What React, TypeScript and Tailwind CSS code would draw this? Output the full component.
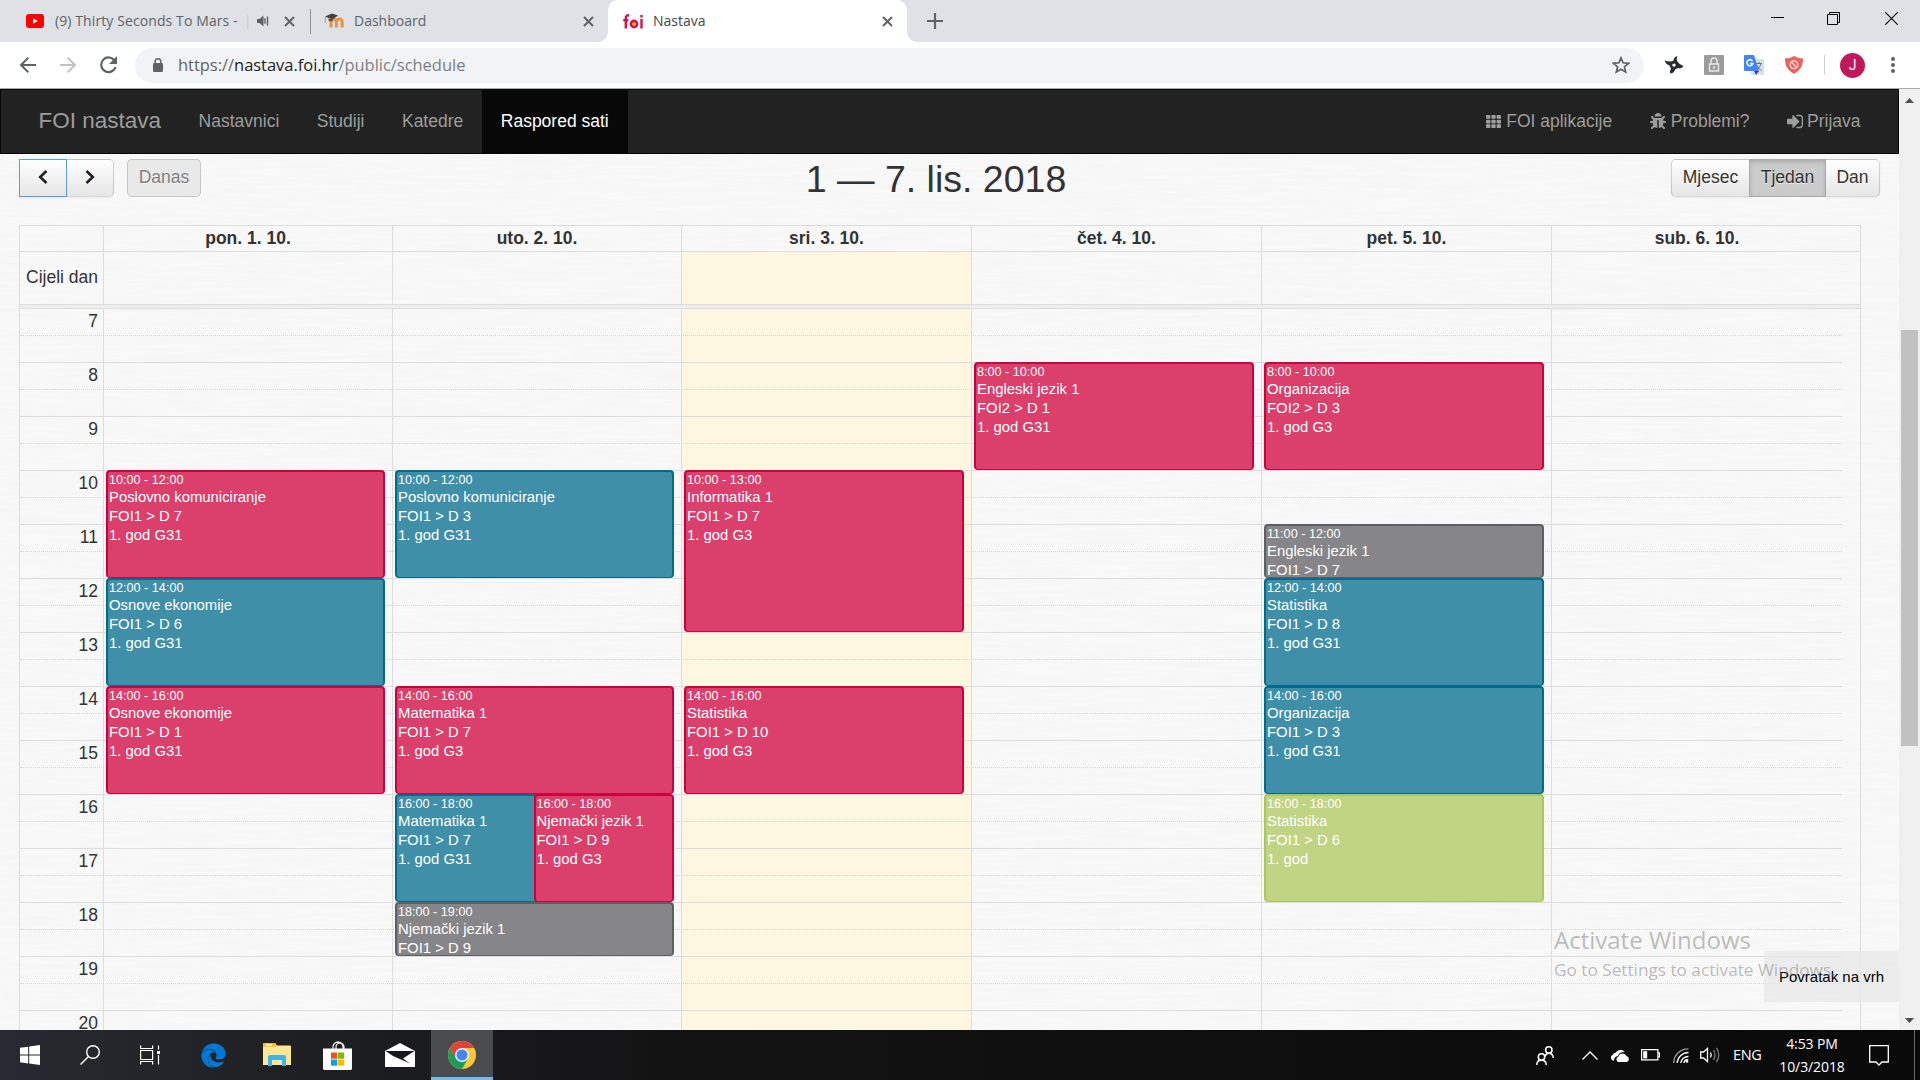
import type { ReactNode } from "react";
import clsx from "clsx";
import { FaBug, FaEdge, FaTh } from "react-icons/fa";

type Tone = "pink" | "teal" | "gray" | "green";

interface Lesson {
  start: number;
  end: number;
  title: string;
  room: string;
  group?: string;
  tone: Tone;
  half?: "left" | "right";
}

interface Day {
  label: string;
  width: string;
  today?: boolean;
  lessons: Lesson[];
}

const FIRST_HOUR = 7;
const HOURS = [7, 8, 9, 10, 11, 12, 13, 14, 15, 16, 17, 18, 19, 20];

const TONES: Record<Tone, string> = {
  pink: "bg-[#db3f6c] border-[#cc0040]",
  teal: "bg-[#3f8fa9] border-[#006b8c]",
  gray: "bg-[#868688] border-[#5e5f61]",
  green: "bg-[#c1d484] border-[#abc65b]",
};

const DAYS: Day[] = [
  {
    label: "pon. 1. 10.",
    width: "w-[289px]",
    lessons: [
      { start: 10, end: 12, title: "Poslovno komuniciranje", room: "FOI1 > D 7", group: "1. god G31", tone: "pink" },
      { start: 12, end: 14, title: "Osnove ekonomije", room: "FOI1 > D 6", group: "1. god G31", tone: "teal" },
      { start: 14, end: 16, title: "Osnove ekonomije", room: "FOI1 > D 1", group: "1. god G31", tone: "pink" },
    ],
  },
  {
    label: "uto. 2. 10.",
    width: "w-[289px]",
    lessons: [
      { start: 10, end: 12, title: "Poslovno komuniciranje", room: "FOI1 > D 3", group: "1. god G31", tone: "teal" },
      { start: 14, end: 16, title: "Matematika 1", room: "FOI1 > D 7", group: "1. god G3", tone: "pink" },
      { start: 16, end: 18, title: "Matematika 1", room: "FOI1 > D 7", group: "1. god G31", tone: "teal", half: "left" },
      { start: 16, end: 18, title: "Njemački jezik 1", room: "FOI1 > D 9", group: "1. god G3", tone: "pink", half: "right" },
      { start: 18, end: 19, title: "Njemački jezik 1", room: "FOI1 > D 9", tone: "gray" },
    ],
  },
  {
    label: "sri. 3. 10.",
    width: "w-[290px]",
    today: true,
    lessons: [
      { start: 10, end: 13, title: "Informatika 1", room: "FOI1 > D 7", group: "1. god G3", tone: "pink" },
      { start: 14, end: 16, title: "Statistika", room: "FOI1 > D 10", group: "1. god G3", tone: "pink" },
    ],
  },
  {
    label: "čet. 4. 10.",
    width: "w-[290px]",
    lessons: [
      { start: 8, end: 10, title: "Engleski jezik 1", room: "FOI2 > D 1", group: "1. god G31", tone: "pink" },
    ],
  },
  {
    label: "pet. 5. 10.",
    width: "w-[290px]",
    lessons: [
      { start: 8, end: 10, title: "Organizacija", room: "FOI2 > D 3", group: "1. god G3", tone: "pink" },
      { start: 11, end: 12, title: "Engleski jezik 1", room: "FOI1 > D 7", tone: "gray" },
      { start: 12, end: 14, title: "Statistika", room: "FOI1 > D 8", group: "1. god G31", tone: "teal" },
      { start: 14, end: 16, title: "Organizacija", room: "FOI1 > D 3", group: "1. god G31", tone: "teal" },
      { start: 16, end: 18, title: "Statistika", room: "FOI1 > D 6", group: "1. god", tone: "green" },
    ],
  },
  { label: "sub. 6. 10.", width: "w-[290px]", lessons: [] },
];

/* ---------- Browser ---------- */

const CloseIcon = ({ className }: { className?: string }) => (
  <svg className={clsx("h-[11px] w-[11px] shrink-0", className)} viewBox="0 0 11 11" stroke="#5f6368" strokeWidth="2">
    <path d="M1 1l9 9M10 1l-9 9" />
  </svg>
);

const TabStrip = () => (
  <div className="flex h-[42px] shrink-0 bg-[#dee1e6] font-['Open_Sans',sans-serif] text-[14px] text-[#5f6368]">
    <div className="flex w-[311px] items-center pl-[26px]">
      <svg className="h-[14px] w-[18px] shrink-0" viewBox="0 0 18 14">
        <rect width="18" height="14" rx="3" fill="#f00" />
        <path d="M7 4.2v5.6L11.8 7z" fill="#fff" />
      </svg>
      <span className="ml-[11px] w-[194px] overflow-hidden pb-[2px] whitespace-nowrap tracking-[0.1px]">
        (9) Thirty Seconds To Mars -<span className="ml-1.5 text-[#c9ccd1]">|</span>
      </span>
      <svg className="ml-[8px] h-[12px] w-[13px] shrink-0" viewBox="0 0 13 12" fill="#5f6368">
        <path d="M0 4h2.500L6.500.500v11L2.500 8H0z" />
        <path d="M8 3.200v5.600M10.500 1.500v9" stroke="#5f6368" strokeWidth="1.400" />
      </svg>
      <CloseIcon className="ml-[14px]" />
      <div className="ml-auto h-[25px] w-px bg-[#90949a]" />
    </div>
    <div className="flex w-[297px] items-center pl-[13px]">
      <svg className="h-[16px] w-[21px] shrink-0" viewBox="0 0 21 16">
        <path d="M5.500 15V9.500a2.700 2.700 0 015.400 0V15M10.900 15V9.500a2.900 2.900 0 015.800 0V15" transform="translate(1.500 -.5)" fill="none" stroke="#f0923b" strokeWidth="3" />
        <path d="M1 3.500L8 .5l6 2-5.500 4z" fill="#45413d" />
        <path d="M1.500 4L1 10" stroke="#b98a55" strokeWidth=".8" />
        <path d="M4.500 5.500v2.500l4 .5V6z" fill="#5b564f" />
      </svg>
      <span className="ml-[9px] pb-[2px]">Dashboard</span>
      <CloseIcon className="mr-[14px] ml-auto" />
    </div>
    <div className="relative flex w-[299px] items-center rounded-t-[10px] bg-white pl-[15px] text-[#45484c]">
      <svg className="absolute bottom-0 -left-[10px] h-[10px] w-[10px]" viewBox="0 0 10 10" fill="#fff">
        <path d="M10 0v10H0A10 10 0 0010 0z" />
      </svg>
      <svg className="absolute -right-[10px] bottom-0 h-[10px] w-[10px]" viewBox="0 0 10 10" fill="#fff">
        <path d="M0 0v10h10A10 10 0 010 0z" />
      </svg>
      <svg className="h-[15px] w-[21px] shrink-0" viewBox="0 0 21 15" fill="none" stroke="#d6124a" strokeWidth="2.400">
        <path d="M2.800 14.500V4.200Q2.800 1.200 6 1.300M.3 6.300h5" />
        <circle cx="11" cy="10" r="3" strokeWidth="2.800" />
        <circle cx="11" cy="10" r="1.500" fill="#f5c400" stroke="none" />
        <path d="M18.500 5v9.500M18.500 1v2.400" />
      </svg>
      <span className="ml-[9px] pb-[2px]">Nastava</span>
      <CloseIcon className="mr-[14px] ml-auto" />
    </div>
    <div className="flex flex-1 items-center pl-[20px]">
      <svg className="h-4 w-4" viewBox="0 0 16 16" stroke="#5f6368" strokeWidth="2.200">
        <path d="M8 0v16M0 8h16" />
      </svg>
      <div className="mb-[5px] ml-auto flex items-center pr-[22px]">
        <svg className="h-[13px] w-[13px]" viewBox="0 0 13 13" stroke="#000">
          <path d="M0 5.500h13" />
        </svg>
        <svg className="ml-[43px] h-[13px] w-[13px]" viewBox="0 0 13 13" stroke="#000" fill="none">
          <path d="M.5 2.500h10v10H.5zM2.500 2.500v-2h10v10h-2" />
        </svg>
        <svg className="ml-[45px] h-[13px] w-[13px]" viewBox="0 0 13 13" stroke="#000" strokeWidth="1.100">
          <path d="M.3.3l12.400 12.400M12.700.3L.3 12.700" />
        </svg>
      </div>
    </div>
  </div>
);

const Toolbar = () => (
  <div className="flex h-[47px] shrink-0 items-center border-b border-[#a9a9a9] bg-white pl-[19px]">
    <svg className="h-[18px] w-[18px]" viewBox="0 0 18 18" fill="none" stroke="#5f6368" strokeWidth="2">
      <path d="M17 9H2.500M9.300 1.700L2 9l7.300 7.300" />
    </svg>
    <svg className="ml-[22px] h-[18px] w-[18px]" viewBox="0 0 18 18" fill="none" stroke="#c0c2c5" strokeWidth="2">
      <path d="M1 9h14.500M8.700 1.700L16 9l-7.300 7.300" />
    </svg>
    <svg className="ml-[22px] h-[18px] w-[19px]" viewBox="0 0 19 18" fill="none" stroke="#5f6368" strokeWidth="2.200">
      <path d="M15.800 5A7.300 7.300 0 1016.500 11" />
      <path d="M18 0v8h-8z" fill="#5f6368" stroke="none" />
    </svg>
    <div className="ml-[17px] flex h-[35px] w-[1509px] items-center rounded-full bg-[#f1f3f4] pl-[18px]">
      <svg className="h-[14px] w-[10px]" viewBox="0 0 10 14">
        <rect y="5" width="10" height="9" rx="1.200" fill="#5f6368" />
        <path d="M2.200 6V3.600a2.800 2.800 0 015.600 0V6" fill="none" stroke="#5f6368" strokeWidth="1.500" />
      </svg>
      <span className="ml-[15px] font-['Open_Sans',sans-serif] text-[16.5px] tracking-[-0.03px] whitespace-nowrap text-[#7c8085]">
        <span className="text-[#5f6368]">https://</span>
        <span className="text-[#202124]">nastava.foi.hr</span>/public/schedule
      </span>
      <svg className="mr-[14px] ml-auto h-[18px] w-[18px]" viewBox="0 0 18 18" fill="none" stroke="#5f6368" strokeWidth="1.700">
        <path d="M9 1.800l2.100 5 5.400.5-4.100 3.500 1.300 5.300L9 13.300l-4.700 2.800 1.300-5.300L1.500 7.300l5.400-.5z" />
      </svg>
    </div>
    <svg className="ml-[20px] h-[20px] w-[20px]" viewBox="0 0 20 20" fill="#2b2e30">
      <path fillRule="evenodd" d="M13.500 1q-1.500 3.500 0 5.500 2 3.500 6 4.500-2 3.500-5.500 2-2.500 1-3 1.500-.5 3-4 4-2.500-1 0-4.500-1-3-1.500-3.500Q2 9.500.5 5.500 4 6.500 6.500 6.500 9 6 9.500 5.500 9.500 2 13.500 1zM10 8.400a1.700 1.700 0 100 3.400 1.700 1.700 0 000-3.400z" />
    </svg>
    <svg className="ml-[20px] h-[20px] w-[20px]" viewBox="0 0 20 20" fill="none" stroke="#e8e8e8" strokeWidth="1.400">
      <rect width="20" height="20" rx="1" fill="#9c9c9c" stroke="none" />
      <path d="M5.500 9h9v7h-9zM7 9V6a3 3 0 016 0v3M10 11v3" />
    </svg>
    <svg className="ml-[20px] h-[20px] w-[20px]" viewBox="0 0 20 20">
      <rect x="7" y="4" width="13" height="16" rx="1" fill="#dcdfe0" />
      <path d="M12 8.500h6M15 7v1.500M17 8.500q-1 4.500-4.500 6.500M13 10.500q1.500 3 4.500 5" stroke="#607d8b" fill="none" />
      <path d="M0 1a1 1 0 011-1h9l5 16H1a1 1 0 01-1-1z" fill="#4285f4" />
      <path d="M10 16h5l-3 4z" fill="#3142b8" />
      <path d="M8.500 6.200A3 3 0 108.800 8.500H6.300" stroke="#fff" strokeWidth="1.400" fill="none" />
    </svg>
    <svg className="ml-[21px] h-[18px] w-[18px]" viewBox="0 0 18 18" fill="none" stroke="#fbd9d7">
      <path d="M9 0q4 2.500 9 2.500Q18.500 13 9 18-.5 13 0 2.500 5 2.500 9 0z" fill="#f0605c" stroke="none" />
      <circle cx="9" cy="8.800" r="3.800" strokeWidth="1.400" />
      <path d="M6.300 6.100l5.400 5.400" strokeWidth="1.400" />
    </svg>
    <div className="ml-[21px] h-5 w-px bg-[#cfd1d4]" />
    <div className="ml-[15px] flex h-[25px] w-[25px] items-center justify-center rounded-full bg-[#c2185b] font-[Roboto,sans-serif] text-[14px] text-white">
      J
    </div>
    <svg className="ml-[26px] h-[16px] w-[4px]" viewBox="0 0 4 16" fill="#5f6368">
      <circle cx="2" cy="2" r="2" />
      <circle cx="2" cy="8" r="2" />
      <circle cx="2" cy="14" r="2" />
    </svg>
  </div>
);

const Scrollbar = () => (
  <div className="flex w-[21px] shrink-0 flex-col items-center bg-[#f0f0f0]">
    <svg className="mt-[9px] h-[5px] w-[9px]" viewBox="0 0 9 5" fill="#505050">
      <path d="M0 5L4.500 0 9 5z" />
    </svg>
    <div className="mt-[227px] h-[416px] w-[17px] bg-[#c1c1c1]" />
    <svg className="mt-auto mb-[7px] h-[5px] w-[9px]" viewBox="0 0 9 5" fill="#505050">
      <path d="M0 0l4.500 5L9 0z" />
    </svg>
  </div>
);

/* ---------- Page ---------- */

const NavLink = ({ children, active }: { children: ReactNode; active?: boolean }) => (
  <a className={clsx("flex h-full items-center px-[18.75px] pb-px whitespace-nowrap", active ? "bg-[#080808] text-white" : "text-[#9d9d9d]")}>
    {children}
  </a>
);

const Navbar = () => (
  <nav className="flex h-[65px] shrink-0 items-center border border-[#080808] bg-[#222] px-[18.75px] text-[17.5px] text-[#9d9d9d]">
    <a className="px-[18.75px] pb-[2px] text-[22.5px] whitespace-nowrap">FOI nastava</a>
    <NavLink>Nastavnici</NavLink>
    <NavLink>Studiji</NavLink>
    <NavLink>Katedre</NavLink>
    <NavLink active>Raspored sati</NavLink>
    <div className="ml-auto flex h-full">
      <NavLink>
        <FaTh className="mr-[5px] h-[15px] w-[15px]" />
        FOI aplikacije
      </NavLink>
      <NavLink>
        <FaBug className="mr-[5px] h-[16px] w-[16px]" />
        Problemi?
      </NavLink>
      <NavLink>
        <svg className="mr-[4px] h-[17px] w-[16px]" viewBox="0 128 1536 1536" fill="currentColor">
          <path d="M1184 896q0 26-19 45l-544 544q-19 19-45 19t-45-19-19-45v-288H64q-26 0-45-19t-19-45V704q0-26 19-45t45-19h448V352q0-26 19-45t45-19 45 19l544 544q19 19 19 45zm352-352v704q0 119-84.500 203.500T1248 1536H928q-13 0-22.500-9.500T896 1504q0-4-1-20t-.5-26.500 3-23.500 10-19.500 20.500-6.500h320q66 0 113-47t47-113V544q0-66-47-113t-113-47H936l-11.500-1-11.500-3-8-5.500-7-9-2-13.500q0-4-1-20t-.5-26.500 3-23.500 10-19.500 20.500-6.500h320q119 0 203.500 84.500T1536 544z" />
        </svg>
        Prijava
      </NavLink>
    </div>
  </nav>
);

const BUTTON = "flex h-[38px] items-center justify-center border border-black/15 pb-[2px] text-[17.5px] [text-shadow:0_1px_1px_rgba(255,255,255,0.75)]";
const BUTTON_UP = "bg-gradient-to-b from-white to-[#e6e6e6] shadow-[0_1px_2px_rgba(0,0,0,0.06)]";

const CalendarToolbar = () => (
  <div className="mt-[5px] flex h-[66px] items-start justify-between pr-[19px] pl-[19px]">
    <div className="flex">
      <button className={clsx(BUTTON, BUTTON_UP, "w-[48px] border-[#5b9bf5]! shadow-[0_0_0_0.5px_#5b9bf5]")}>
        <svg className="h-[14px] w-[10px]" viewBox="0 0 10 14" fill="none" stroke="#222" strokeWidth="2.600">
          <path d="M8.500 1L2.200 7l6.300 6" />
        </svg>
      </button>
      <button className={clsx(BUTTON, BUTTON_UP, "w-[47px] rounded-r-[5px] border-l-0")}>
        <svg className="h-[14px] w-[10px]" viewBox="0 0 10 14" fill="none" stroke="#222" strokeWidth="2.600">
          <path d="M1.500 1l6.300 6-6.300 6" />
        </svg>
      </button>
      <button className={clsx(BUTTON, "ml-[13px] w-[74px] rounded-[5px] bg-[#e9e9e9] text-[#808080]")}>Danas</button>
    </div>
    <h2 className="text-[37.5px] leading-[40px] whitespace-nowrap">1 — 7. lis. 2018</h2>
    <div className="flex">
      <button className={clsx(BUTTON, BUTTON_UP, "w-[78px] rounded-l-[5px] border-r-0")}>Mjesec</button>
      <button className={clsx(BUTTON, "w-[77px] bg-[#cbcbcb] shadow-[inset_0_2px_4px_rgba(0,0,0,0.15)]")}>Tjedan</button>
      <button className={clsx(BUTTON, BUTTON_UP, "w-[54px] rounded-r-[5px] border-l-0")}>Dan</button>
    </div>
  </div>
);

const LessonCard = ({ lesson }: { lesson: Lesson }) => (
  <div
    className={clsx(
      "min-h-0 overflow-hidden rounded-[4px] border-2 border-b pl-[1px] text-[14.875px] leading-[19px] text-white",
      TONES[lesson.tone],
      lesson.half === "left" && "col-start-1 -mr-1",
      lesson.half === "right" && "z-10 col-start-2 -ml-px",
      !lesson.half && "col-span-2 col-start-1",
    )}
    style={{ gridRow: `${lesson.start - FIRST_HOUR + 1} / ${lesson.end - FIRST_HOUR + 1}` }}
  >
    <div className="text-[12.64px] leading-[16px] whitespace-nowrap">
      {lesson.start}:00 - {lesson.end}:00
    </div>
    <div className="whitespace-nowrap">{lesson.title}</div>
    <div>{lesson.room}</div>
    <div>{lesson.group}</div>
  </div>
);

const Calendar = () => (
  <div className="mr-[38px] ml-[19px] flex min-h-0 flex-1 flex-col border border-b-0 border-[#ddd]">
    <div className="flex h-[26px] shrink-0 border-b border-[#ddd] text-center leading-[25px] font-bold">
      <div className="w-[84px] border-r border-[#ddd]" />
      {DAYS.map((day, i) => (
        <div key={day.label} className={clsx(day.width, i < 5 && "border-r border-[#ddd]")}>
          {day.label}
        </div>
      ))}
    </div>
    <div className="flex h-[52px] shrink-0">
      <div className="flex w-[84px] items-center justify-end border-r border-[#ddd] pr-[5px] pb-[2px] whitespace-nowrap">Cijeli dan</div>
      {DAYS.map((day, i) => (
        <div key={day.label} className={clsx(day.width, i < 5 && "border-r border-[#ddd]", day.today && "bg-[#fdf7e2]")} />
      ))}
    </div>
    <div className="h-[5px] shrink-0 border-y border-[#ddd] bg-[#eee]" />
    <div className="grid min-h-0 flex-1 overflow-hidden">
      <div className="col-start-1 row-start-1 flex">
        <div className="w-[84px] border-r border-[#ddd]" />
        {DAYS.map((day, i) => (
          <div key={day.label} className={clsx(day.width, i < 5 && "border-r border-[#ddd]", day.today && "bg-[#fdf7e2]")} />
        ))}
      </div>
      <div className="col-start-1 row-start-1 w-[1822px]">
        {HOURS.map((hour) => (
          <div key={hour} className="h-[54px] border-b border-[#ddd]">
            <div className="h-[27px] border-b border-dotted border-[#d6d6d6]">
              <div className="w-[78px] text-right leading-[25px]">{hour}</div>
            </div>
          </div>
        ))}
      </div>
      <div className="col-start-1 row-start-1 -mt-px flex pl-[84px]">
        {DAYS.map((day) => (
          <div key={day.label} className={clsx(day.width, "grid auto-rows-[54px] grid-cols-2 pr-[8px] pl-[2px]")}>
            {day.lessons.map((lesson, i) => (
              <LessonCard key={i} lesson={lesson} />
            ))}
          </div>
        ))}
      </div>
    </div>
  </div>
);

const BrushedBackground = () => (
  <svg className="absolute inset-0 h-full w-full">
    <filter id="brushed">
      <feTurbulence type="fractalNoise" baseFrequency="0.014 0.3" numOctaves="3" seed="4" />
      <feColorMatrix values="0 0 0 0 0.4  0 0 0 0 0.4  0 0 0 0 0.4  0.08 0 0 0 -0.022" />
    </filter>
    <rect width="100%" height="100%" filter="url(#brushed)" />
  </svg>
);

const Page = () => (
  <div className="relative flex min-w-0 flex-1 flex-col overflow-hidden bg-[#f9f9f9] font-['Liberation_Sans',Arial,sans-serif] text-[17.5px] text-[#333]">
    <BrushedBackground />
    <div className="relative flex min-h-0 flex-1 flex-col">
      <Navbar />
      <CalendarToolbar />
      <Calendar />
    </div>
    <a className="absolute right-0 bottom-[28px] flex h-[51px] w-[135px] items-center justify-center bg-[#e8e8e8]/75 pt-[2px] text-[15px] whitespace-nowrap text-black">
      Povratak na vrh
    </a>
    <div className="absolute right-[65px] bottom-[48px] w-[280px] font-['Open_Sans',sans-serif] whitespace-nowrap text-[#6e6e6e]/45">
      <div className="text-[24px] leading-[34px]">Activate Windows</div>
      <div className="text-[17.2px] leading-[25px]">Go to Settings to activate Windows.</div>
    </div>
  </div>
);

/* ---------- Taskbar ---------- */

const Taskbar = () => (
  <div className="flex h-[50px] shrink-0 items-center bg-gradient-to-r from-[#292a31] via-[#131314] via-35% to-[#0b0a0a] font-['Open_Sans',sans-serif] text-white">
    <div className="flex w-[60px] justify-center">
      <svg className="h-[20px] w-[20px]" viewBox="0 0 20 20" fill="#fff">
        <path d="M0 2.800L8.200 1.700v7.900H0zM9.200 1.500L20 0v9.600H9.200zM0 10.500h8.200v7.900L0 17.200zM9.200 10.500H20V20L9.200 18.500z" />
      </svg>
    </div>
    <div className="flex w-[60px] justify-center">
      <svg className="h-[20px] w-[20px]" viewBox="0 0 20 20" fill="none" stroke="#fff" strokeWidth="1.400">
        <circle cx="13" cy="7" r="6.300" />
        <path d="M8.500 11.500L.5 19.500" />
      </svg>
    </div>
    <div className="flex w-[60px] justify-center">
      <svg className="h-[20px] w-[20px]" viewBox="0 0 20 20" fill="none" stroke="#fff" strokeWidth="1.200">
        <path d="M.6 5.500h12v9H.6zM.6.500v3h12v-3M.6 19.500v-3h12v3M18.500.5v4M18.500 10v9.500" />
        <path d="M17 6h3v3h-3z" fill="#fff" stroke="none" />
      </svg>
    </div>
    <div className="flex w-[67px] justify-center">
      <FaEdge className="h-[27px] w-[25px] text-[#0078d7]" />
    </div>
    <div className="flex w-[59px] justify-center">
      <svg className="h-[24px] w-[28px]" viewBox="0 0 28 24">
        <path d="M0 1a1 1 0 011-1h11l2 2.500h13a1 1 0 011 1V22H0z" fill="#ffe694" />
        <path d="M0 1a1 1 0 011-1h11l1.500 3-1 1H0z" fill="#fcc42c" />
        <path d="M3 1.500h6V3H3z" fill="#fff" />
        <path d="M5 23V14a2 2 0 012-2h14a2 2 0 012 2v9h-4v-6H9v6z" fill="#3fb4e8" />
      </svg>
    </div>
    <div className="flex w-[63px] justify-center">
      <svg className="h-[29px] w-[29px]" viewBox="0 0 29 29">
        <path d="M10 8V6a5 5 0 0110 0v2M13 8V6a4 4 0 018 0v2" fill="none" stroke="#e8e8e8" strokeWidth="1.300" />
        <path d="M0 7.500h29v20.500l-1 1H1l-1-1z" fill="#fff" />
        <path d="M8 11.500h6.200v6.200H8z" fill="#f25022" />
        <path d="M15 11.500h6.200v6.200H15z" fill="#7fba00" />
        <path d="M8 18.500h6.200v6.200H8z" fill="#00a4ef" />
        <path d="M15 18.500h6.200v6.200H15z" fill="#ffb900" />
      </svg>
    </div>
    <div className="flex w-[62px] justify-center">
      <svg className="h-[24px] w-[30px]" viewBox="0 0 30 24">
        <path d="M0 8L15 0l15 8v16H0z" fill="#fff" />
        <path d="M.5 8h29l-11.500 7.500 7 5-17-7.500z" fill="#17181b" />
      </svg>
    </div>
    <div className="flex h-full w-[62px] items-center justify-center border-b-[3px] border-[#76b9ed] bg-[#4a4b4e] pt-[3px]">
      <svg className="h-[28px] w-[28px]" viewBox="0 0 28 28">
        <circle cx="14" cy="14" r="14" fill="#fcc934" />
        <path d="M1.900 7A14 14 0 0014 28l6.100-10.500H14L7.900 17.500z" fill="#1a9c5b" />
        <path d="M1.900 7a14 14 0 0124.200 0H14v7l-6.100 3.500z" fill="#db4437" />
        <circle cx="14" cy="14" r="7" fill="#f1f1f1" />
        <circle cx="14" cy="14" r="5.500" fill="#4285f4" />
      </svg>
    </div>

    <div className="ml-auto flex h-full items-center">
      <svg className="h-[19px] w-[18px]" viewBox="0 0 18 19" fill="none" stroke="#fff" strokeWidth="1.500">
        <circle cx="12.800" cy="4" r="3.200" />
        <path d="M9 10.500Q10 7.300 12.800 7.300q4 0 4.500 4.500" />
        <circle cx="5.500" cy="11" r="3.200" />
        <path d="M.8 19q0-4.700 4.700-4.700t4.700 4.700" />
      </svg>
      <svg className="ml-[28px] h-[9px] w-[16px]" viewBox="0 0 16 9" fill="none" stroke="#fff" strokeWidth="1.300">
        <path d="M.5 8.500L8 1l7.500 7.500" />
      </svg>
      <svg className="ml-[12px] h-[13px] w-[20px]" viewBox="0 0 20 13" fill="#fff">
        <path d="M4 11.500H3A3 3 0 012.500 6 4 4 0 016 3.500 5 5 0 0114.500 3Q9 3 8 7q-4 .5-4 4.500z" />
        <path d="M8 13a3 3 0 01.5-5.500A4.300 4.300 0 0116.500 7 3.200 3.200 0 0117 13z" />
      </svg>
      <svg className="ml-[11px] h-[12px] w-[19px]" viewBox="0 0 19 12">
        <path d="M.6.6h16.300v10.300H.6zM17 3.800h1.500v4H17" fill="none" stroke="#fff" strokeWidth="1.200" />
        <path d="M2.200 2.200h4v7.200h-4z" fill="#fff" />
      </svg>
      <svg className="ml-[13px] h-[15px] w-[16px]" viewBox="0 0 16 15" fill="none" stroke="#fff" strokeWidth="1.300">
        <path d="M.7 15A14.500 14.500 0 0115.500.8" stroke="#9a9a9a" />
        <path d="M4.200 15A11 11 0 0115.500 4.500M7.700 15a7.500 7.500 0 017.800-6.500" />
        <path d="M10.800 15a4 4 0 014.500-3.200" />
        <circle cx="14" cy="13.500" r="1.300" fill="#fff" stroke="none" />
      </svg>
      <svg className="ml-[11px] h-[16px] w-[20px]" viewBox="0 0 20 16" fill="none" stroke="#fff" strokeWidth="1.300">
        <path d="M.7 5h2.800L7.500 1.500v13L3.500 11H.7z" />
        <path d="M10.500 5.500q1.500 2.500 0 5" />
        <path d="M13.500 3q3 5 0 10M16.500.8q4.500 7.200 0 14.400" stroke="#777" />
      </svg>
      <span className="ml-[13px] w-[30px] text-[14.5px] tracking-[-0.3px]">ENG</span>
      <div className="ml-[14px] w-[70px] text-center text-[14px] leading-[23px] tracking-[-0.1px] whitespace-nowrap">
        <div>4:53 PM</div>
        <div>10/3/2018</div>
      </div>
      <svg className="ml-[22px] h-[21px] w-[20px]" viewBox="0 0 20 21" fill="none" stroke="#fff" strokeWidth="1.300">
        <path d="M.7.7h18.600v16.300h-6.300L10 20l-3-3H.7z" />
      </svg>
      <div className="ml-[25px] h-full w-px bg-[#6a6a6a]" />
      <div className="w-[5px]" />
    </div>
  </div>
);

export default function App() {
  return (
    <div className="flex h-[1080px] w-[1920px] flex-col overflow-hidden bg-white">
      <TabStrip />
      <Toolbar />
      <div className="flex min-h-0 flex-1">
        <Page />
        <Scrollbar />
      </div>
      <Taskbar />
    </div>
  );
}
